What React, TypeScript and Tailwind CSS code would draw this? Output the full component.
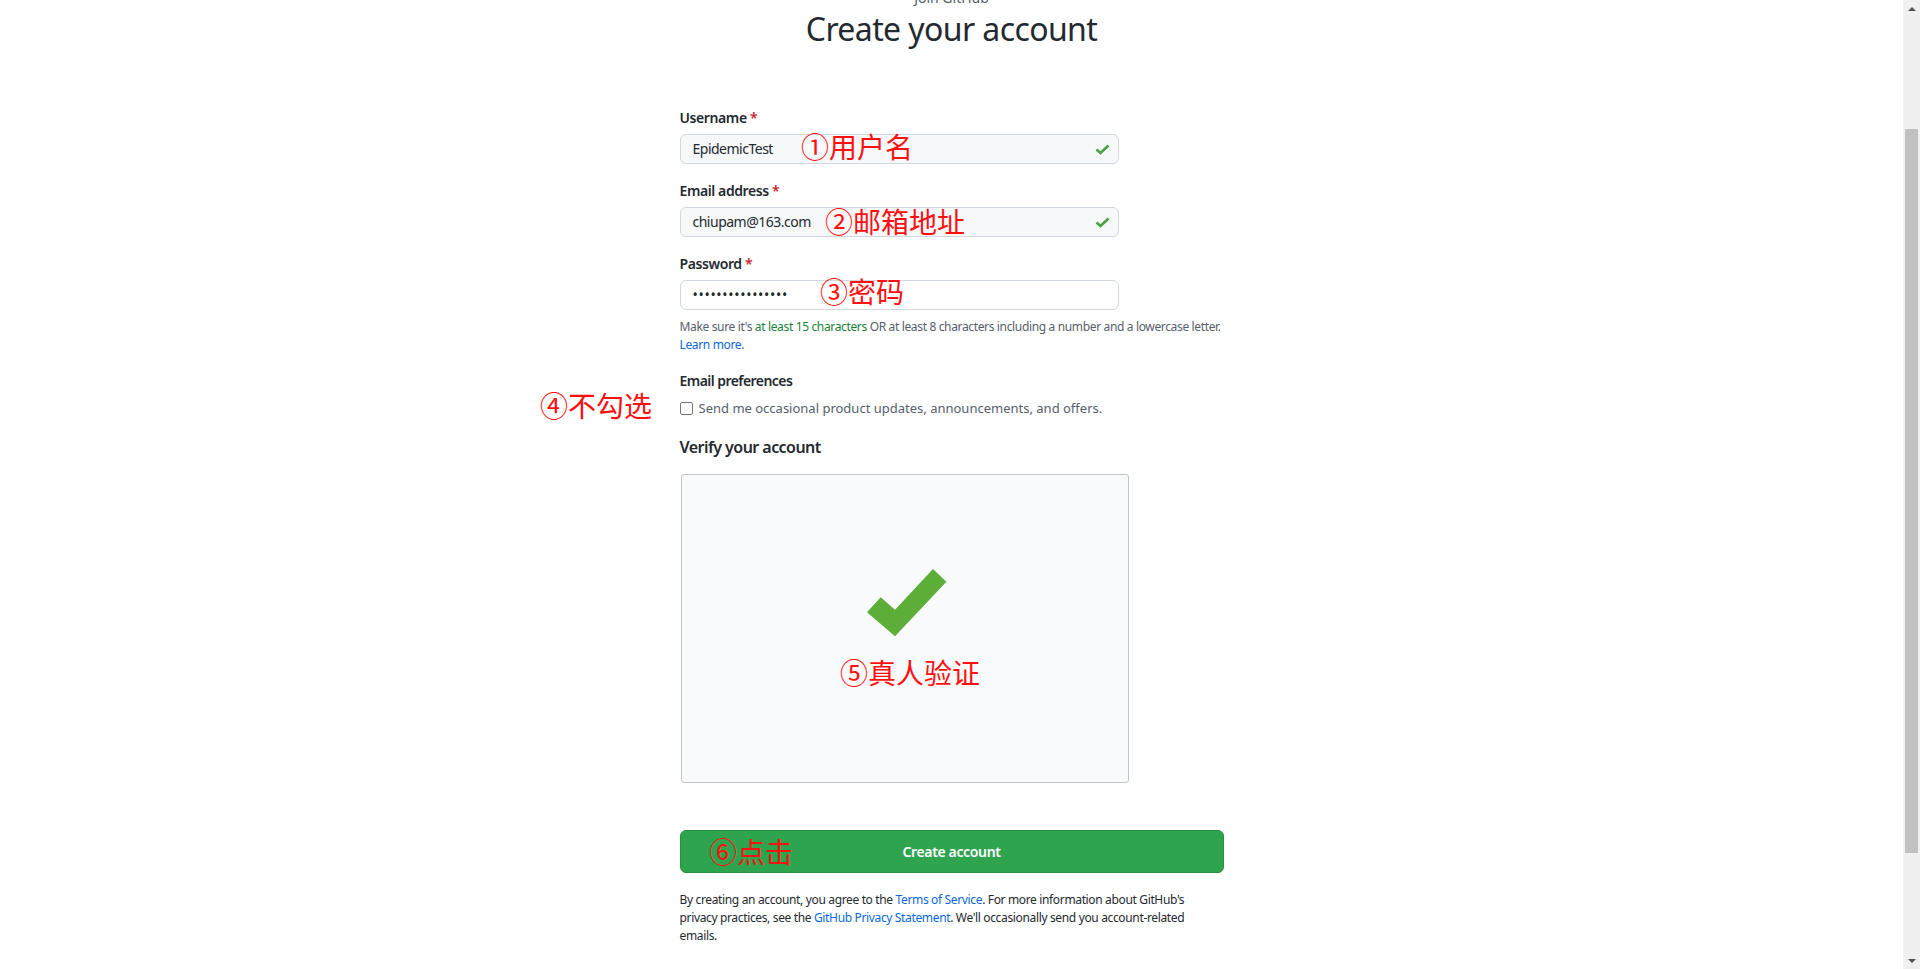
import React from 'react'

const annotate = "absolute leading-none whitespace-nowrap text-[28px] text-[#ff1010] font-['Noto_Sans_CJK_SC',sans-serif]"

function InputCheck() {
  return (
    <svg width="15" height="11" viewBox="0 0 15 11" className="shrink-0">
      <polyline points="1.5,5.5 5.5,9 13.5,1.5" fill="none" stroke="#48a23f" strokeWidth="2.6" />
    </svg>
  )
}

interface FieldProps {
  label: string
  value: string
  valid?: boolean
  password?: boolean
}

function Field({ label, value, valid, password }: FieldProps) {
  return (
    <div className="flex flex-col">
      <label className="text-sm leading-[21px] font-semibold tracking-[-0.4px] text-[#24292f]">
        {label} <span className="text-[#cf222e]">*</span>
      </label>
      <div
        className={
          'mt-[6px] flex h-[30px] items-center justify-between rounded-md border border-[#d0d7de] pl-3 pr-2 ' +
          (password ? 'bg-white' : 'bg-[#f6f8fa]')
        }
      >
        <span className={password ? 'text-sm tracking-[0.7px] text-[#24292f]' : 'text-sm tracking-[-0.5px] text-[#24292f]'}>
          {value}
        </span>
        {valid && <InputCheck />}
      </div>
    </div>
  )
}

function Scrollbar() {
  return (
    <div className="flex h-full w-[17px] shrink-0 flex-col bg-[#f0f0f0]">
      <div className="flex h-[17px] items-center justify-center">
        <div className="h-0 w-0 border-x-[4px] border-b-[4px] border-x-transparent border-b-[#505050]" />
      </div>
      <div className="flex-1">
        <div className="mx-[2px] mt-[112px] h-[724px] bg-[#c1c1c1]" />
      </div>
      <div className="flex h-[17px] items-center justify-center">
        <div className="h-0 w-0 border-x-[4px] border-t-[4px] border-x-transparent border-t-[#505050]" />
      </div>
    </div>
  )
}

export default function App() {
  return (
    <div className="flex h-[969px] w-full overflow-hidden bg-white font-['Noto_Sans',sans-serif] text-[#24292f]">
      <div className="relative min-w-0 flex-1">
        {/* Heading, scrolled partly out of view */}
        <div className="-mt-[13px] flex flex-col items-center">
          <p className="text-sm leading-[21px] text-[#57606a]">Join GitHub</p>
          <h1 className="mt-[1px] text-[32px] leading-[40px] font-normal tracking-[-0.6px] text-[#24292f]">
            Create your account
          </h1>
        </div>

        <form className="mx-auto mt-[58px] flex w-[544px] flex-col">
          <div className="flex w-[439px] flex-col gap-[16px]">
            <Field label="Username" value="EpidemicTest" valid />
            <Field label="Email address" value="chiupam@163.com" valid />
            <Field label="Password" value="••••••••••••••••" password />
          </div>

          <p className="mt-[8px] whitespace-nowrap text-xs leading-[18px] tracking-[-0.35px] text-[#57606a]">
            Make sure it's <span className="text-[#1a7f37]">at least 15 characters</span> OR at least 8 characters including a number and a lowercase letter.
            <br />
            <a className="text-[#0969da]">Learn more</a>.
          </p>

          <h2 className="mt-[16px] text-sm leading-[21px] font-semibold tracking-[-0.55px]">Email preferences</h2>
          <label className="mt-[7px] flex items-center gap-[6px] text-[13px] leading-[21px] text-[#57606a]">
            <span className="h-[13px] w-[13px] rounded-[2px] border border-[#767676] bg-white" />
            Send me occasional product updates, announcements, and offers.
          </label>

          <h2 className="mt-[16px] text-base leading-[24px] font-semibold tracking-[-0.55px]">Verify your account</h2>

          {/* Captcha frame */}
          <div className="mt-[15px] ml-px h-[309px] w-[448px] rounded-[3px] border border-[#c4c4c4] bg-[#f9fafb] pl-[185px] pt-[94px]">
            <svg width="80" height="68" viewBox="0 0 80 68">
              <polygon points="0,43.3 13.7,28.3 28,40.7 66,0 79.4,12.7 28,67.3" fill="#5cae38" />
            </svg>
          </div>

          <button
            type="button"
            className="mt-[47px] h-[43px] w-full rounded-md border border-[#2a8f45] bg-[#2ea44f] text-sm font-semibold tracking-[-0.35px] text-white"
          >
            Create account
          </button>

          <p className="mt-[18px] whitespace-nowrap text-xs leading-[18px] tracking-[-0.35px] text-[#24292f]">
            By creating an account, you agree to the <a className="text-[#0969da]">Terms of Service</a>. For more information about GitHub's
            <br />
            privacy practices, see the <a className="text-[#0969da]">GitHub Privacy Statement</a>. We'll occasionally send you account-related
            <br />
            emails.
          </p>
        </form>

        {/* red step notes drawn over the form */}
        <span className={annotate + ' left-[801px] top-[132px]'}>①用户名</span>
        <span className={annotate + ' left-[825px] top-[207px]'}>②邮箱地址</span>
        <span className={annotate + ' left-[820px] top-[277px]'}>③密码</span>
        <span className={annotate + ' left-[540px] top-[391px]'}>④不勾选</span>
        <span className={annotate + ' left-[840px] top-[658px]'}>⑤真人验证</span>
        <span className={annotate + ' left-[709px] top-[837px]'}>⑥点击</span>
      </div>
      <Scrollbar />
    </div>
  )
}
